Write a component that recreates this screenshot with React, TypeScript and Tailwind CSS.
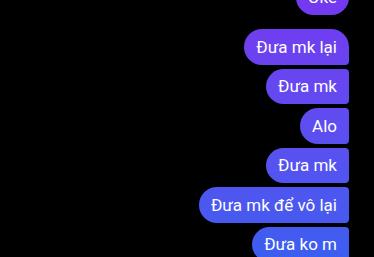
const messages = [
  { text: 'Oke', shape: 'rounded-[18px]' },
  { text: 'Đưa mk lại', shape: 'rounded-l-[18px] rounded-tr-[18px] rounded-br-[4px]' },
  { text: 'Đưa mk', shape: 'rounded-l-[18px] rounded-r-[4px]' },
  { text: 'Alo', shape: 'rounded-l-[18px] rounded-r-[4px]' },
  { text: 'Đưa mk', shape: 'rounded-l-[18px] rounded-r-[4px]' },
  { text: 'Đưa mk để vô lại', shape: 'rounded-l-[18px] rounded-r-[4px]' },
  { text: 'Đưa ko m', shape: 'rounded-l-[18px] rounded-r-[4px]' },
];

const App = () => {
  return (
    <div className="w-[374px] h-[257px] bg-black overflow-hidden font-['Roboto',sans-serif]">
      <div className="flex flex-col items-end pr-[25px] mt-[-20.5px]">
        {messages.map((m, i) => (
          <div
            key={i}
            className={`h-[35.5px] flex items-center px-3 pt-px text-[17px] text-white leading-none whitespace-nowrap bg-fixed bg-linear-to-b from-[#7438f0] to-[#3b5ef0] ${m.shape} ${i === 0 ? 'mb-[14px]' : 'mb-[4px]'}`}
          >
            {m.text}
          </div>
        ))}
      </div>
    </div>
  );
};

export default App;
